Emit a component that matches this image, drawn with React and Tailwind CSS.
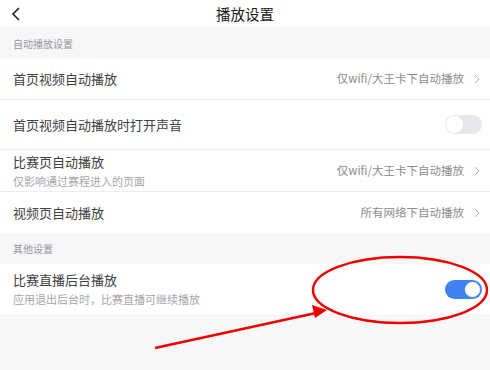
import React from 'react';

const font = { fontFamily: '"Noto Sans CJK SC", "Noto Sans", sans-serif' };

function Chevron() {
  return (
    <svg width="6" height="10" viewBox="0 0 6 10" className="ml-[10px] shrink-0">
      <polyline points="1,1 5,5 1,9" fill="none" stroke="#b5b5b5" strokeWidth="1" />
    </svg>
  );
}

function Toggle({ on }) {
  return on ? (
    <div className="w-[37px] h-[19px] rounded-full bg-[#3f83f0] flex items-center justify-end p-[1px]">
      <div className="w-[17px] h-[17px] rounded-full bg-white border border-[#3f83f0]" />
    </div>
  ) : (
    <div className="w-[37px] h-[19px] rounded-full bg-[#e8e8ec] flex items-center p-[1px]">
      <div className="w-[17px] h-[17px] rounded-full bg-white" />
    </div>
  );
}

function Section({ title, height }) {
  return (
    <div className={`${height} flex items-center px-[13px] text-[10px] text-[#9397a0]`}>{title}</div>
  );
}

function Row({ title, sub, right, toggle, height, border = true }) {
  return (
    <div className={`${height} bg-white flex items-center pl-[13px] pr-[10px] ${border ? 'border-b border-[#ededed]' : ''}`}>
      <div className="flex-1 flex flex-col">
        <span className="text-[13px] leading-[18px] text-[#404040]">{title}</span>
        {sub && <span className="text-[11px] leading-[16px] text-[#a5a5aa] mt-[2px]">{sub}</span>}
      </div>
      {right && (
        <div className="flex items-center text-[11.5px] text-[#8c8c8c]">
          {right}
          <Chevron />
        </div>
      )}
      {toggle !== undefined && (
        <div className="mr-[-2px]">
          <Toggle on={toggle} />
        </div>
      )}
    </div>
  );
}

export default function App() {
  return (
    <div className="relative w-[490px] h-[370px] bg-[#f7f7f8] overflow-hidden" style={font}>
      {/* Header */}
      <div className="h-[27px] bg-white flex items-center relative">
        <svg width="10" height="14" viewBox="0 0 10 14" className="ml-[11px]">
          <polyline points="8,1 2,7 8,13" fill="none" stroke="#222" strokeWidth="1.6" />
        </svg>
        <span className="absolute left-0 right-0 text-center text-[14.5px] text-[#1a1a1a] pointer-events-none">播放设置</span>
      </div>

      <Section title="自动播放设置" height="h-[32px]" />
      <Row height="h-[41px]" title="首页视频自动播放" right="仅wifi/大王卡下自动播放" />
      <Row height="h-[50px]" title="首页视频自动播放时打开声音" toggle={false} />
      <Row height="h-[42px]" title="比赛页自动播放" sub="仅影响通过赛程进入的页面" right="仅wifi/大王卡下自动播放" />
      <Row height="h-[41px]" title="视频页自动播放" right="所有网络下自动播放" border={false} />

      <Section title="其他设置" height="h-[31px]" />
      <Row height="h-[50px]" title="比赛直播后台播放" sub="应用退出后台时，比赛直播可继续播放" toggle={true} border={false} />

      {/* Annotation */}
      <svg className="absolute inset-0 pointer-events-none" width="490" height="370" viewBox="0 0 490 370">
        <ellipse cx="400" cy="290" rx="87" ry="33" fill="none" stroke="#ee0000" strokeWidth="2.5" />
        <line x1="155" y1="348" x2="316" y2="313" stroke="#ee0000" strokeWidth="2.5" />
        <polygon points="327,310 312,305 315,318" fill="#ee0000" />
      </svg>
    </div>
  );
}
